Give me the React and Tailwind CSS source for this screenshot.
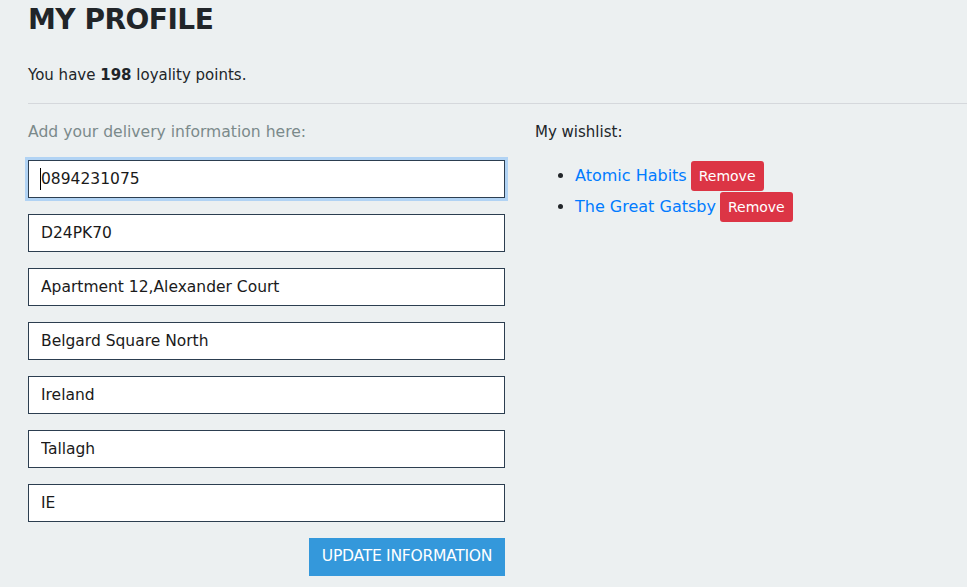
import { useState } from 'react';

const fields = [
  '0894231075',
  'D24PK70',
  'Apartment 12,Alexander Court',
  'Belgard Square North',
  'Ireland',
  'Tallagh',
  'IE',
];

const wishlist = ['Atomic Habits', 'The Great Gatsby'];

export default function App() {
  const [values, setValues] = useState(fields);
  const [books, setBooks] = useState(wishlist);

  return (
    <div className="min-h-[587px] bg-[#ecf0f1] pl-[28px] pt-px text-[#212529] overflow-hidden" style={{ fontFamily: '"DejaVu Sans", sans-serif' }}>
      <h1 className="text-[28px] font-bold leading-[38px] tracking-[-0.5px] mb-[24px]">MY PROFILE</h1>
      <p className="text-[15px] leading-[24px]">
        You have <b>198</b> loyality points.
      </p>
      <hr className="mt-[16px] mb-[16px] border-t border-[#d5d8dc]" />

      <div className="flex gap-[30px]">
        <form className="w-[477px] flex flex-col gap-[16px]" onSubmit={e => e.preventDefault()}>
          <p className="text-[15.6px] leading-[24px] text-[#7b8a8b]">Add your delivery information here:</p>
          {values.map((v, i) => (
            <div key={i} className="relative">
              <input
                type="text"
                value={v}
                onChange={e => setValues(p => p.map((x, j) => (j === i ? e.target.value : x)))}
                className={`w-full h-[38px] px-[12px] bg-white border border-[#2c3e50] text-[15.5px] text-[#1a1a1a] outline-none ${i === 0 ? 'shadow-[0_0_0_3px_rgba(0,123,255,0.25)]' : ''}`}
              />
              {i === 0 && <span className="absolute left-[12px] top-[8px] w-px h-[22px] bg-black" />}
            </div>
          ))}
          <div className="flex justify-end">
            <button type="submit" className="w-[196px] h-[38px] bg-[#3498db] text-white text-[15.6px] uppercase tracking-[-0.3px]">
              Update Information
            </button>
          </div>
        </form>

        <div className="flex-1">
          <p className="text-[15px] leading-[24px] mb-[17px]">My wishlist:</p>
          <ul className="list-disc pl-[40px] text-[16px]">
            {books.map(b => (
              <li key={b} className="h-[31px] leading-[30px]">
                <a href="#" className="text-[#007bff]">{b}</a>
                <button
                  onClick={() => setBooks(p => p.filter(x => x !== b))}
                  className="ml-[4px] h-[30px] px-[8px] bg-[#dc3545] text-white text-[14px] rounded-[3px] align-top leading-[30px]"
                >
                  Remove
                </button>
              </li>
            ))}
          </ul>
        </div>
      </div>
    </div>
  );
}
